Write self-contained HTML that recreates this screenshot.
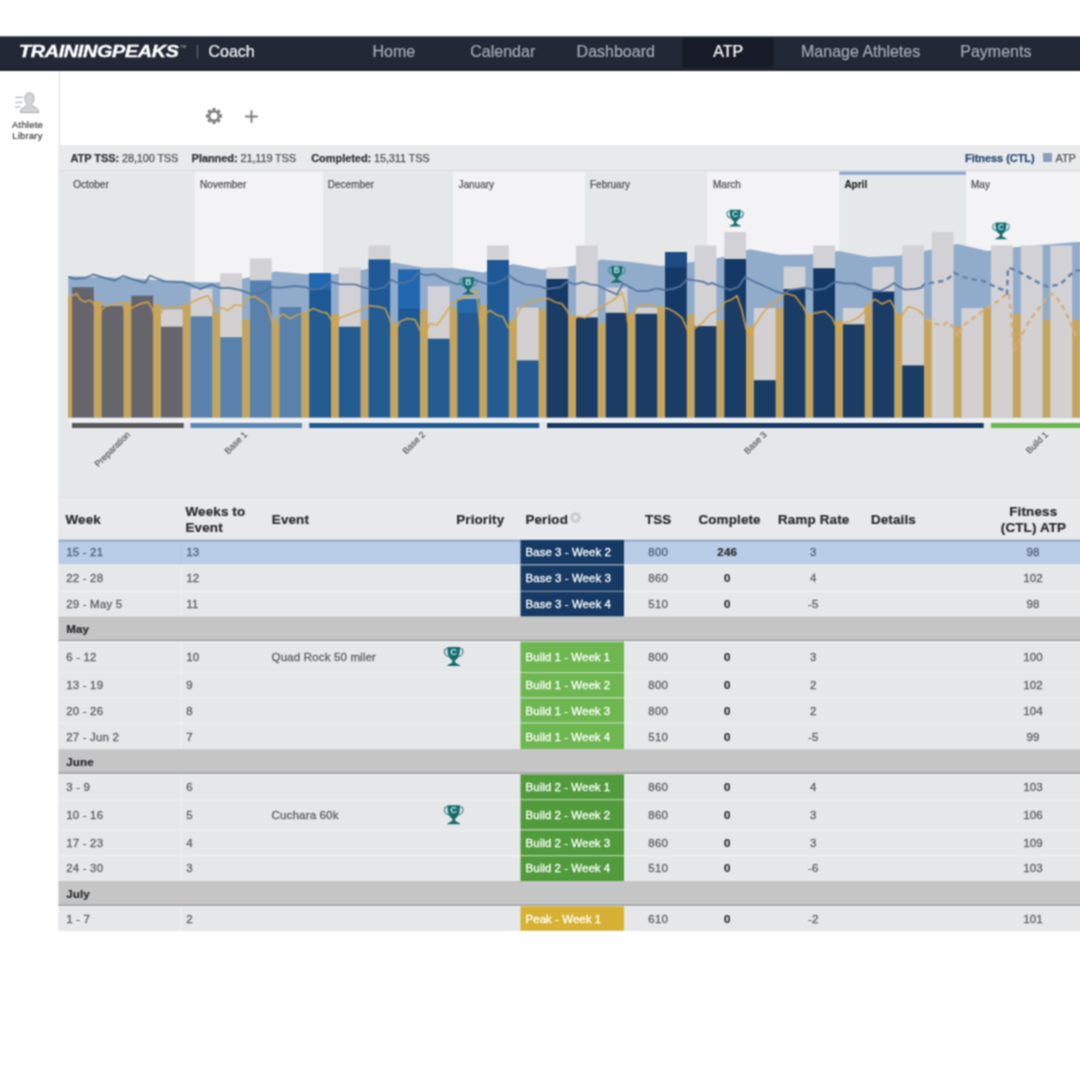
<!DOCTYPE html>
<html lang="en">
<head>
<meta charset="utf-8">
<title>TrainingPeaks Coach - ATP</title>
<style>
*{box-sizing:border-box;margin:0;padding:0}
html,body{width:1080px;height:1080px;background:#fff;overflow:hidden}
body{position:relative;font-family:"Liberation Sans",Arial,Helvetica,sans-serif;color:#555}
.abs{position:absolute}
#clip{position:absolute;left:0;top:0;width:1080px;height:1080px;overflow:hidden;background:#fff}
#blur{position:absolute;left:-40px;top:-40px;width:1160px;height:1160px;background:#fff;filter:url(#soft)}
#page{position:absolute;left:40px;top:40px;width:1080px;height:1080px}
#nav{position:absolute;left:0;top:36px;width:1080px;height:35px}
#navbg{position:absolute;left:-40px;top:36px;width:1160px;height:35px;background:linear-gradient(#222836,#222836 80%,#1f2430);border-top:1px solid #646872}
#nav .logo{position:absolute;left:18.6px;top:0;height:35px;line-height:31px;font-size:16px;font-weight:bold;font-style:italic;color:#fff;transform:scaleX(1.235);transform-origin:0 50%;letter-spacing:-0.25px;white-space:nowrap;-webkit-text-stroke:0.35px #fff}
#nav .tm{position:absolute;left:180.3px;top:7.5px;font-size:4px;color:#c8cad0;line-height:5px}
#nav .div{position:absolute;left:196.5px;top:8.6px;width:1px;height:13.5px;background:#6f7480}
#nav .it{position:absolute;top:0;height:35px;line-height:31px;font-size:16px;color:#a6aab6;white-space:nowrap;-webkit-text-stroke:0.2px}
#nav .coach{color:#f2f3f6;left:208.5px}
#nav .act{position:absolute;left:682px;top:2px;width:92px;height:30px;background:#161b27;border-radius:4px}
#side .t{position:absolute;left:0;width:55px;text-align:center;font-size:9.3px;letter-spacing:0.28px;line-height:10.7px;color:#38393d;-webkit-text-stroke:0.2px;top:120px}
#vline{position:absolute;left:58.7px;top:71px;width:1.2px;height:75px;background:#dfe0e3}
#pedge{position:absolute;left:58px;top:145px;width:1px;height:786px;background:#eeeef1}
#panel{position:absolute;left:59px;top:145px;width:1061px;height:786px;background:#e6e7e9}
#stats{position:absolute;left:59px;top:145px;width:1061px;height:26px;background:#e9eaec;border-bottom:1px solid #dadbde}
#stats span{position:absolute;top:0;line-height:26px;font-size:11px;letter-spacing:-0.17px;color:#505155;white-space:nowrap;-webkit-text-stroke:0.25px}
#stats b{color:#34353a;letter-spacing:-0.05px}
#chart{position:absolute;left:0;top:171px;width:1080px;height:326.5px;overflow:visible;font-family:"Liberation Sans",Arial,sans-serif}
#tsvg{position:absolute;left:0;top:490px;overflow:visible;font-family:"Liberation Sans",Arial,sans-serif}
.gear{position:absolute;left:204px;top:106.3px}
.gear2{position:absolute;left:568.8px;top:510.8px}
.plus{position:absolute;left:245.3px;top:110.4px}
</style>
</head>
<body>
<svg width="0" height="0" style="position:absolute"><defs><filter id="soft" x="0" y="0" width="100%" height="100%" color-interpolation-filters="sRGB"><feConvolveMatrix order="3" kernelMatrix="0.2500 0.5000 0.2500 0.5000 1.0000 0.5000 0.2500 0.5000 0.2500" edgeMode="duplicate" preserveAlpha="true"/></filter></defs></svg>
<div id="clip">
<div id="blur">
<div id="page">
<div id="navbg"></div>
<div id="nav">
  <div class="logo">TRAININGPEAKS</div>
  <div class="tm">TM</div>
  <div class="div"></div>
  <div class="it coach">Coach</div>
  <div class="act"></div>
  <div class="it" style="left:372.5px">Home</div>
  <div class="it" style="left:470.3px">Calendar</div>
  <div class="it" style="left:576.6px">Dashboard</div>
  <div class="it" style="left:713.3px;color:#fff">ATP</div>
  <div class="it" style="left:801px">Manage Athletes</div>
  <div class="it" style="left:960.3px">Payments</div>
</div>
<div id="side">
  <svg class="abs" style="left:12px;top:90px" width="30" height="25" viewBox="12 90 30 25">
    <g stroke="#a9aaad" stroke-width="1.1" fill="none">
      <line x1="15.3" y1="97.4" x2="22.5" y2="97.4"/>
      <line x1="15.3" y1="102.3" x2="22.5" y2="102.3"/>
      <line x1="15.3" y1="107" x2="20.5" y2="107"/>
    </g>
    <path d="M29.5 92.8c2.9 0 4.6 2.2 4.6 5.3 0 2.6-1 4.9-2.4 6.2v1.4c2.9 1 6.6 2.6 7.2 6.8H20.1c.6-4.2 4.3-5.800 7.200-6.800v-1.400c-1.400-1.300-2.400-3.600-2.400-6.200 0-3.100 1.700-5.300 4.600-5.300z" fill="#d3d4d6" stroke="#a9aaad" stroke-width="1"/>
  </svg>
  <div class="t" style="top:120.4px">Athlete</div><div class="t" style="top:131px">Library</div>
</div>
<div id="vline"></div>
<svg class="gear" viewBox="-10 -10 20 20" width="20" height="20"><g fill="#808082"><rect x="-1.700" y="-8.1" width="3.4" height="3.6" rx="0.8" transform="rotate(0)"/><rect x="-1.700" y="-8.1" width="3.4" height="3.6" rx="0.8" transform="rotate(45)"/><rect x="-1.700" y="-8.1" width="3.4" height="3.6" rx="0.8" transform="rotate(90)"/><rect x="-1.700" y="-8.1" width="3.4" height="3.6" rx="0.8" transform="rotate(135)"/><rect x="-1.700" y="-8.1" width="3.4" height="3.6" rx="0.8" transform="rotate(180)"/><rect x="-1.700" y="-8.1" width="3.4" height="3.6" rx="0.8" transform="rotate(225)"/><rect x="-1.700" y="-8.1" width="3.4" height="3.6" rx="0.8" transform="rotate(270)"/><rect x="-1.700" y="-8.1" width="3.4" height="3.6" rx="0.8" transform="rotate(315)"/></g><circle r="4.700" fill="none" stroke="#808082" stroke-width="2.3"/></svg>
<svg class="plus" width="13" height="13" viewBox="-6.5 -6.5 13 13"><path d="M-6.300 0H6.300M0 -6.300V6.300" stroke="#7c7c7e" stroke-width="1.9" fill="none"/></svg>
<div id="pedge"></div>
<div id="panel"></div>
<div id="stats">
  <span style="left:11.4px"><b>ATP TSS:</b> 28,100 TSS</span>
  <span style="left:132.6px"><b>Planned:</b> 21,119 TSS</span>
  <span style="left:252.2px"><b>Completed:</b> 15,311 TSS</span>
  <span style="left:906px;color:#30507a"><b style="color:#30507a">Fitness (CTL)</b></span>
  <i class="abs" style="left:984px;top:7.500px;width:9.200px;height:9.600px;background:#8d9dbc"></i>
  <span style="left:996.6px">ATP</span>
</div>
<svg id="chart" viewBox="0 171 1080 326.5" width="1080" height="326.5">
<rect x="194.8" y="171.5" width="128.2" height="247" fill="#f3f3f5"/>
<rect x="453" y="171.5" width="132.0" height="247" fill="#f3f3f5"/>
<rect x="707" y="171.5" width="132.3" height="247" fill="#f3f3f5"/>
<rect x="966" y="171.5" width="154.0" height="247" fill="#f3f3f5"/>
<rect x="839.3" y="171.5" width="126.7" height="3.3" fill="#8ea7cf"/>
<rect x="68.3" y="417.5" width="1052" height="5" fill="#eeeff2"/>
<polygon points="68.3,276.0 97.7,277.0 127.4,278.0 157.0,280.0 186.7,282.0 216.3,282.6 246.0,278.0 275.6,271.5 305.3,274.0 334.9,274.3 364.6,269.6 394.2,262.6 423.9,267.8 453.5,268.0 483.2,272.4 512.8,264.0 542.5,269.6 572.1,266.0 601.8,259.4 631.4,261.9 661.1,266.0 690.7,262.2 720.4,257.6 750.0,249.3 779.7,254.8 809.3,254.4 839.0,251.1 868.6,257.0 898.3,255.7 927.9,250.2 957.6,244.0 987.2,251.0 1016.9,247.0 1046.5,244.6 1076.2,242.0 1120.0,242.0 1120.0,417.5 68.3,417.5" fill="#91accb"/>
<rect x="68.0" y="297.4" width="4.3" height="120.1" fill="#c5a660"/>
<rect x="93.5" y="301" width="8.4" height="116.5" fill="#c5a660"/>
<rect x="123.2" y="302" width="8.5" height="115.5" fill="#c5a660"/>
<rect x="152.8" y="304" width="8.5" height="113.5" fill="#c5a660"/>
<rect x="182.4" y="304.8" width="8.5" height="112.7" fill="#c5a660"/>
<rect x="212.1" y="313" width="8.5" height="104.5" fill="#c5a660"/>
<rect x="241.7" y="319.6" width="8.5" height="97.9" fill="#c5a660"/>
<rect x="271.4" y="321.5" width="8.5" height="96.0" fill="#c5a660"/>
<rect x="301.0" y="314" width="8.5" height="103.5" fill="#c5a660"/>
<rect x="330.7" y="314" width="8.5" height="103.5" fill="#c5a660"/>
<rect x="360.3" y="319.6" width="8.5" height="97.9" fill="#c5a660"/>
<rect x="390.0" y="323.5" width="8.5" height="94.0" fill="#c5a660"/>
<rect x="419.6" y="309.4" width="8.5" height="108.1" fill="#c5a660"/>
<rect x="449.3" y="308.2" width="8.5" height="109.3" fill="#c5a660"/>
<rect x="478.9" y="304.8" width="8.5" height="112.7" fill="#c5a660"/>
<rect x="508.6" y="320.5" width="8.4" height="97.0" fill="#c5a660"/>
<rect x="538.2" y="309.4" width="8.4" height="108.1" fill="#c5a660"/>
<rect x="567.9" y="315.2" width="8.4" height="102.3" fill="#c5a660"/>
<rect x="597.5" y="323.3" width="8.4" height="94.2" fill="#c5a660"/>
<rect x="627.2" y="314" width="8.4" height="103.5" fill="#c5a660"/>
<rect x="656.9" y="307.6" width="8.4" height="109.9" fill="#c5a660"/>
<rect x="686.5" y="314" width="8.4" height="103.5" fill="#c5a660"/>
<rect x="716.1" y="320.5" width="8.4" height="97.0" fill="#c5a660"/>
<rect x="745.8" y="326" width="8.4" height="91.5" fill="#c5a660"/>
<rect x="775.4" y="307.6" width="8.4" height="109.9" fill="#c5a660"/>
<rect x="805.1" y="314" width="8.4" height="103.5" fill="#c5a660"/>
<rect x="834.8" y="320.5" width="8.4" height="97.0" fill="#c5a660"/>
<rect x="864.4" y="305.7" width="8.4" height="111.8" fill="#c5a660"/>
<rect x="894.0" y="314" width="8.4" height="103.5" fill="#c5a660"/>
<rect x="923.7" y="319.6" width="8.4" height="97.9" fill="#c5a660"/>
<rect x="953.4" y="326.1" width="8.4" height="91.4" fill="#c5a660"/>
<rect x="983.0" y="307.6" width="8.4" height="109.9" fill="#c5a660"/>
<rect x="1012.6" y="314" width="8.4" height="103.5" fill="#c5a660"/>
<rect x="1042.3" y="319.6" width="8.4" height="97.9" fill="#c5a660"/>
<rect x="1072.0" y="319.6" width="8.4" height="97.9" fill="#c5a660"/>
<rect x="72.0" y="287.2" width="21.8" height="130.3" fill="#64646f"/>
<rect x="101.7" y="306.0" width="21.8" height="111.5" fill="#64646f"/>
<rect x="131.3" y="295.6" width="21.8" height="121.9" fill="#64646f"/>
<rect x="160.9" y="309.4" width="21.8" height="108.1" fill="#d2d2d6"/>
<rect x="160.9" y="326.7" width="21.8" height="90.8" fill="#64646f"/>
<rect x="190.6" y="288.5" width="21.8" height="129.0" fill="#d2d2d6"/>
<rect x="190.6" y="316.3" width="21.8" height="101.2" fill="#5581b0"/>
<rect x="220.2" y="273.3" width="21.8" height="144.2" fill="#d2d2d6"/>
<rect x="220.2" y="337.2" width="21.8" height="80.3" fill="#5581b0"/>
<rect x="249.9" y="258.5" width="21.8" height="159.0" fill="#d2d2d6"/>
<rect x="249.9" y="280.4" width="21.8" height="137.1" fill="#5581b0"/>
<rect x="279.5" y="307.0" width="21.8" height="110.5" fill="#5581b0"/>
<rect x="309.2" y="273.3" width="21.8" height="144.2" fill="#1e5995"/>
<rect x="309.2" y="273.3" width="21.8" height="15.7" fill="#2268b0"/>
<rect x="338.8" y="267.4" width="21.8" height="150.1" fill="#d2d2d6"/>
<rect x="338.8" y="326.7" width="21.8" height="90.8" fill="#1e5995"/>
<rect x="368.5" y="245.5" width="21.8" height="172.0" fill="#d2d2d6"/>
<rect x="368.5" y="259.4" width="21.8" height="158.1" fill="#1e5995"/>
<rect x="398.1" y="269.6" width="21.8" height="147.9" fill="#1e5995"/>
<rect x="398.1" y="269.6" width="21.8" height="38.9" fill="#2268b0"/>
<rect x="427.8" y="286.3" width="21.8" height="131.2" fill="#d2d2d6"/>
<rect x="427.8" y="338.7" width="21.8" height="78.8" fill="#1e5995"/>
<rect x="457.4" y="299.3" width="21.8" height="118.2" fill="#1e5995"/>
<rect x="457.4" y="299.3" width="21.8" height="13.7" fill="#2268b0"/>
<rect x="487.1" y="245.5" width="21.8" height="172.0" fill="#d2d2d6"/>
<rect x="487.1" y="260.0" width="21.8" height="157.5" fill="#1e5995"/>
<rect x="516.8" y="307.6" width="21.8" height="109.9" fill="#d2d2d6"/>
<rect x="516.8" y="360.4" width="21.8" height="57.1" fill="#1e5995"/>
<rect x="546.4" y="267.4" width="21.8" height="150.1" fill="#d2d2d6"/>
<rect x="546.4" y="278.9" width="21.8" height="138.6" fill="#153967"/>
<rect x="576.0" y="245.5" width="21.8" height="172.0" fill="#d2d2d6"/>
<rect x="576.0" y="317.4" width="21.8" height="100.1" fill="#153967"/>
<rect x="605.7" y="287.5" width="21.8" height="130.0" fill="#d2d2d6"/>
<rect x="605.7" y="312.8" width="21.8" height="104.7" fill="#153967"/>
<rect x="635.4" y="307.6" width="21.8" height="109.9" fill="#d2d2d6"/>
<rect x="635.4" y="313.7" width="21.8" height="103.8" fill="#153967"/>
<rect x="665.0" y="252.0" width="21.8" height="165.5" fill="#153967"/>
<rect x="665.0" y="252.0" width="21.8" height="15.4" fill="#1d4c82"/>
<rect x="694.6" y="245.5" width="21.8" height="172.0" fill="#d2d2d6"/>
<rect x="694.6" y="326.1" width="21.8" height="91.4" fill="#153967"/>
<rect x="724.3" y="232.0" width="21.8" height="185.5" fill="#d2d2d6"/>
<rect x="724.3" y="259.0" width="21.8" height="158.5" fill="#153967"/>
<rect x="753.9" y="308.0" width="21.8" height="109.5" fill="#d2d2d6"/>
<rect x="753.9" y="380.2" width="21.8" height="37.3" fill="#153967"/>
<rect x="783.6" y="266.7" width="21.8" height="150.8" fill="#d2d2d6"/>
<rect x="783.6" y="289.0" width="21.8" height="128.5" fill="#153967"/>
<rect x="813.2" y="245.5" width="21.8" height="172.0" fill="#d2d2d6"/>
<rect x="813.2" y="268.2" width="21.8" height="149.3" fill="#153967"/>
<rect x="842.9" y="308.0" width="21.8" height="109.5" fill="#d2d2d6"/>
<rect x="842.9" y="324.3" width="21.8" height="93.2" fill="#153967"/>
<rect x="872.5" y="266.9" width="21.8" height="150.6" fill="#d2d2d6"/>
<rect x="872.5" y="291.5" width="21.8" height="126.0" fill="#153967"/>
<rect x="902.2" y="245.5" width="21.8" height="172.0" fill="#d2d2d6"/>
<rect x="902.2" y="365.4" width="21.8" height="52.1" fill="#153967"/>
<rect x="931.8" y="232.0" width="21.8" height="185.5" fill="#d2d2d6"/>
<rect x="961.5" y="308.1" width="21.8" height="109.4" fill="#d2d2d6"/>
<rect x="991.1" y="245.5" width="21.8" height="172.0" fill="#d2d2d6"/>
<rect x="1020.8" y="245.5" width="21.8" height="172.0" fill="#d2d2d6"/>
<rect x="1050.4" y="245.5" width="21.8" height="172.0" fill="#d2d2d6"/>
<rect x="1080.1" y="245.5" width="21.8" height="172.0" fill="#d2d2d6"/>
<polygon points="68.0,299.3 72.0,295.6 77.0,293.7 80.0,299.3 85.0,302.0 90.0,300.2 94.0,303.9 98.0,316.0 101.0,310.4 105.0,306.7 115.0,303.9 122.0,302.0 126.0,314.0 130.0,308.5 140.0,303.9 148.0,302.0 152.0,308.5 156.0,321.5 160.0,314.0 165.0,307.6 175.0,306.7 185.0,307.6 190.0,303.0 200.0,298.3 208.0,295.6 212.0,303.0 215.0,311.3 222.0,307.6 228.0,310.4 235.0,304.8 242.0,305.7 248.0,297.4 255.0,296.5 260.0,300.0 267.0,304.8 272.0,321.5 278.0,317.8 283.0,314.0 290.0,318.7 297.0,315.0 305.0,313.0 313.0,308.5 322.0,312.2 327.0,313.0 331.0,319.6 335.0,326.0 340.0,317.8 350.0,314.0 360.0,310.4 368.0,305.7 378.0,306.7 385.0,308.5 390.0,319.6 394.0,334.4 400.0,321.5 407.0,318.7 415.0,319.6 420.0,330.0 424.0,335.5 430.0,323.3 437.0,325.0 445.0,314.0 452.0,303.0 460.0,299.3 470.0,295.6 476.0,290.0 478.0,304.8 480.0,325.2 485.0,314.0 490.0,310.4 497.0,315.0 503.0,316.9 508.0,327.0 512.0,331.7 516.0,317.8 520.0,308.5 528.0,303.0 538.0,299.3 548.0,298.3 555.0,302.0 562.0,303.9 567.0,310.4 572.0,321.5 578.0,316.0 585.0,317.8 590.0,314.0 597.0,309.0 605.0,304.8 612.0,301.0 618.0,296.0 622.0,292.8 625.0,303.0 628.0,323.3 633.0,314.0 638.0,305.7 650.0,304.8 658.0,307.6 668.0,308.5 675.0,312.2 682.0,317.8 687.0,328.9 690.0,334.4 695.0,328.0 702.0,323.3 710.0,314.0 718.0,310.4 725.0,302.0 732.0,299.3 737.0,295.6 742.0,310.4 746.0,328.9 750.0,335.4 755.0,325.2 762.0,314.0 770.0,304.8 778.0,299.3 785.0,293.2 795.0,296.0 803.0,306.7 808.0,316.0 815.0,313.0 825.0,311.3 832.0,317.8 838.0,330.7 843.0,323.3 850.0,321.5 858.0,317.8 864.0,312.2 868.0,304.8 875.0,299.3 882.0,303.9 890.0,300.2 894.0,306.7 898.0,321.5 903.0,314.0 908.0,306.7 915.0,308.5 920.0,311.3 928.0,320.0 935.0,323.3 942.0,326.0 948.0,321.5 954.0,328.0 958.0,337.0 962.0,326.5 970.0,320.5 980.0,313.0 988.0,307.6 998.0,301.0 1006.0,294.6 1009.0,292.8 1011.0,314.0 1014.0,351.0 1017.0,347.4 1022.0,334.4 1030.0,319.6 1040.0,306.7 1048.0,295.6 1052.0,293.7 1058.0,299.3 1065.0,310.4 1070.0,321.5 1075.0,334.4 1082.0,338.0 1120.0,338.0 1120.0,417.5 68.3,417.5" fill="#e0a62c" opacity="0.03"/>
<polyline points="68.0,299.3 72.0,295.6 77.0,293.7 80.0,299.3 85.0,302.0 90.0,300.2 94.0,303.9 98.0,316.0 101.0,310.4 105.0,306.7 115.0,303.9 122.0,302.0 126.0,314.0 130.0,308.5 140.0,303.9 148.0,302.0 152.0,308.5 156.0,321.5 160.0,314.0 165.0,307.6 175.0,306.7 185.0,307.6 190.0,303.0 200.0,298.3 208.0,295.6 212.0,303.0 215.0,311.3 222.0,307.6 228.0,310.4 235.0,304.8 242.0,305.7 248.0,297.4 255.0,296.5 260.0,300.0 267.0,304.8 272.0,321.5 278.0,317.8 283.0,314.0 290.0,318.7 297.0,315.0 305.0,313.0 313.0,308.5 322.0,312.2 327.0,313.0 331.0,319.6 335.0,326.0 340.0,317.8 350.0,314.0 360.0,310.4 368.0,305.7 378.0,306.7 385.0,308.5 390.0,319.6 394.0,334.4 400.0,321.5 407.0,318.7 415.0,319.6 420.0,330.0 424.0,335.5 430.0,323.3 437.0,325.0 445.0,314.0 452.0,303.0 460.0,299.3 470.0,295.6 476.0,290.0 478.0,304.8 480.0,325.2 485.0,314.0 490.0,310.4 497.0,315.0 503.0,316.9 508.0,327.0 512.0,331.7 516.0,317.8 520.0,308.5 528.0,303.0 538.0,299.3 548.0,298.3 555.0,302.0 562.0,303.9 567.0,310.4 572.0,321.5 578.0,316.0 585.0,317.8 590.0,314.0 597.0,309.0 605.0,304.8 612.0,301.0 618.0,296.0 622.0,292.8 625.0,303.0 628.0,323.3 633.0,314.0 638.0,305.7 650.0,304.8 658.0,307.6 668.0,308.5 675.0,312.2 682.0,317.8 687.0,328.9 690.0,334.4 695.0,328.0 702.0,323.3 710.0,314.0 718.0,310.4 725.0,302.0 732.0,299.3 737.0,295.6 742.0,310.4 746.0,328.9 750.0,335.4 755.0,325.2 762.0,314.0 770.0,304.8 778.0,299.3 785.0,293.2 795.0,296.0 803.0,306.7 808.0,316.0 815.0,313.0 825.0,311.3 832.0,317.8 838.0,330.7 843.0,323.3 850.0,321.5 858.0,317.8 864.0,312.2 868.0,304.8 875.0,299.3 882.0,303.9 890.0,300.2 894.0,306.7 898.0,321.5 903.0,314.0 908.0,306.7 915.0,308.5 920.0,311.3" fill="none" stroke="#d8a441" stroke-width="1.8" stroke-linejoin="round" opacity="0.8"/>
<polyline points="920.0,311.3 928.0,320.0 935.0,323.3 942.0,326.0 948.0,321.5 954.0,328.0 958.0,337.0 962.0,326.5 970.0,320.5 980.0,313.0 988.0,307.6 998.0,301.0 1006.0,294.6 1009.0,292.8 1011.0,314.0 1014.0,351.0 1017.0,347.4 1022.0,334.4 1030.0,319.6 1040.0,306.7 1048.0,295.6 1052.0,293.7 1058.0,299.3 1065.0,310.4 1070.0,321.5 1075.0,334.4 1082.0,338.0" fill="none" stroke="#d9ab7c" stroke-width="2.5" stroke-dasharray="5.5 4" opacity="0.95" stroke-linejoin="round"/>
<polyline points="68.3,277.0 75.0,279.0 85.0,278.0 93.0,274.5 105.0,278.0 115.0,280.5 123.0,276.0 135.0,280.0 145.0,283.0 150.0,275.5 158.0,279.0 165.0,281.5 183.0,282.0 190.0,284.5 200.0,289.0 205.0,287.0 212.0,284.5 220.0,288.0 230.0,288.0 240.0,290.0 250.0,293.7 262.0,292.8 270.0,287.2 280.0,287.8 295.0,286.0 305.0,287.0 312.0,289.6 322.0,288.5 331.0,281.7 340.0,284.4 355.0,284.4 365.0,287.8 375.0,289.6 385.0,287.2 391.0,279.8 398.0,283.0 405.0,283.0 412.0,279.8 418.0,273.0 425.0,275.2 435.0,274.3 445.0,279.8 457.0,284.4 467.0,282.5 475.0,279.8 485.0,283.5 495.0,283.5 505.0,278.9 509.0,275.2 515.0,279.8 525.0,284.4 540.0,286.3 547.0,289.0 560.0,287.2 567.0,281.7 575.0,284.4 583.0,282.2 590.0,284.4 598.0,285.4 605.0,289.0 615.0,293.7 617.0,294.6 623.0,283.5 630.0,287.2 637.0,291.0 648.0,291.0 656.0,288.5 665.0,290.0 672.0,289.0 680.0,286.3 687.0,279.3 695.0,280.4 703.0,281.7 708.0,284.4 712.0,283.0 720.0,286.3 730.0,290.0 738.0,287.2 745.0,277.0 752.0,280.7 765.0,286.3 775.0,291.0 783.0,293.7 790.0,290.0 805.0,287.8 815.0,290.0 825.0,288.5 835.0,281.7 845.0,283.5 855.0,283.5 862.0,286.3 870.0,289.6 880.0,291.0 888.0,287.2 894.0,283.0 900.0,287.2 905.0,289.6 915.0,289.0 921.0,287.8" fill="none" stroke="#52739c" stroke-width="1.9" stroke-linejoin="round" opacity="0.9"/>
<polyline points="921.0,287.8 925.0,283.5 932.0,282.8 945.0,280.7 950.0,277.0 954.0,272.6 962.0,276.8 975.0,279.8 983.0,280.8 990.0,284.4 1003.0,290.0 1007.0,293.7 1008.0,267.8 1015.0,269.6 1025.0,275.2 1040.0,283.5 1048.0,286.7 1060.0,284.4 1068.0,277.0 1075.0,270.6 1082.0,270.6" fill="none" stroke="#6883a8" stroke-width="2.5" stroke-dasharray="5.5 4" stroke-linejoin="round"/>
<rect x="72" y="423" width="111.8" height="5" fill="#58585c"/>
<rect x="190.5" y="423" width="111.5" height="5" fill="#5a87b3"/>
<rect x="309.3" y="423" width="229.9" height="5" fill="#1f5a92"/>
<rect x="547" y="423" width="436.7" height="5" fill="#163a64"/>
<rect x="991.1" y="423" width="128.9" height="5" fill="#6cb74f"/>
<text x="126.2" y="430.6" transform="rotate(-45 126.2 430.6)" text-anchor="end" dominant-baseline="hanging" font-size="8.9" fill="#58595d" stroke="#58595d" stroke-width="0.2">Preparation</text>
<text x="243.2" y="430.6" transform="rotate(-45 243.2 430.6)" text-anchor="end" dominant-baseline="hanging" font-size="8.9" fill="#58595d" stroke="#58595d" stroke-width="0.2">Base 1</text>
<text x="421.2" y="430.6" transform="rotate(-45 421.2 430.6)" text-anchor="end" dominant-baseline="hanging" font-size="8.9" fill="#58595d" stroke="#58595d" stroke-width="0.2">Base 2</text>
<text x="762.7" y="430.6" transform="rotate(-45 762.7 430.6)" text-anchor="end" dominant-baseline="hanging" font-size="8.9" fill="#58595d" stroke="#58595d" stroke-width="0.2">Base 3</text>
<text x="1044.2" y="430.6" transform="rotate(-45 1044.2 430.6)" text-anchor="end" dominant-baseline="hanging" font-size="8.9" fill="#58595d" stroke="#58595d" stroke-width="0.2">Build 1</text>
<text x="73.2" y="187.6" font-size="10" fill="#505155" stroke="#505155" stroke-width="0.25">October</text>
<text x="200.1" y="187.6" font-size="10" fill="#505155" stroke="#505155" stroke-width="0.25">November</text>
<text x="327.8" y="187.6" font-size="10" fill="#505155" stroke="#505155" stroke-width="0.25">December</text>
<text x="458.5" y="187.6" font-size="10" fill="#505155" stroke="#505155" stroke-width="0.25">January</text>
<text x="590" y="187.6" font-size="10" fill="#505155" stroke="#505155" stroke-width="0.25">February</text>
<text x="713" y="187.6" font-size="10" fill="#505155" stroke="#505155" stroke-width="0.25">March</text>
<text x="844.4" y="187.6" font-size="10" font-weight="bold" fill="#202022" stroke="#202022" stroke-width="0.15">April</text>
<text x="971" y="187.6" font-size="10" fill="#505155" stroke="#505155" stroke-width="0.25">May</text>
<g transform="translate(735.2 209.8) scale(1.0)"><path d="M-5.900 1.5 C-9.300 1.100 -9.100 7.300 -4.300 8.500 M5.900 1.500 C9.300 1.100 9.100 7.300 4.300 8.500" fill="none" stroke="#3a9193" stroke-width="1.15"/><path d="M-5.600 0 H5.600 C5.600 6.600 4.300 10.200 1.300 11.600 L1.200 13.200 C1.700 14.800 5.600 15.200 5.900 16.800 H-5.900 C-5.600 15.200 -1.700 14.800 -1.200 13.200 L-1.300 11.600 C-4.300 10.200 -5.600 6.600 -5.600 0 Z" fill="#196b6d"/><text x="0" y="7.100" text-anchor="middle" font-size="8.200" font-weight="bold" fill="#b2f3ee">C</text></g>
<g transform="translate(1001 222.5) scale(1.0)"><path d="M-5.900 1.5 C-9.300 1.100 -9.100 7.300 -4.300 8.500 M5.900 1.500 C9.300 1.100 9.100 7.300 4.300 8.500" fill="none" stroke="#3a9193" stroke-width="1.15"/><path d="M-5.600 0 H5.600 C5.600 6.600 4.300 10.200 1.300 11.600 L1.200 13.200 C1.700 14.800 5.600 15.200 5.900 16.800 H-5.900 C-5.600 15.200 -1.700 14.800 -1.200 13.200 L-1.300 11.600 C-4.300 10.200 -5.600 6.600 -5.600 0 Z" fill="#196b6d"/><text x="0" y="7.100" text-anchor="middle" font-size="8.200" font-weight="bold" fill="#b2f3ee">C</text></g>
<g transform="translate(468.2 277.3) scale(1.03)"><path d="M-5.900 1.5 C-9.300 1.100 -9.100 7.300 -4.300 8.500 M5.900 1.500 C9.300 1.100 9.100 7.300 4.300 8.500" fill="none" stroke="#3a9193" stroke-width="1.15"/><path d="M-5.600 0 H5.600 C5.600 6.600 4.300 10.200 1.300 11.600 L1.200 13.200 C1.700 14.800 5.600 15.200 5.900 16.800 H-5.900 C-5.600 15.200 -1.700 14.800 -1.200 13.200 L-1.300 11.600 C-4.300 10.200 -5.600 6.600 -5.600 0 Z" fill="#196b6d"/><text x="0" y="7.100" text-anchor="middle" font-size="8.200" font-weight="bold" fill="#b2f3ee">B</text></g>
<g transform="translate(616.8 265.9) scale(1.0)"><path d="M-5.900 1.5 C-9.300 1.100 -9.100 7.300 -4.300 8.500 M5.900 1.500 C9.300 1.100 9.100 7.300 4.300 8.500" fill="none" stroke="#3a9193" stroke-width="1.15"/><path d="M-5.600 0 H5.600 C5.600 6.600 4.300 10.200 1.300 11.600 L1.200 13.200 C1.700 14.800 5.600 15.200 5.900 16.800 H-5.900 C-5.600 15.200 -1.700 14.800 -1.200 13.200 L-1.300 11.600 C-4.300 10.200 -5.600 6.600 -5.600 0 Z" fill="#196b6d"/><text x="0" y="7.100" text-anchor="middle" font-size="8.200" font-weight="bold" fill="#b2f3ee">B</text></g>
</svg>
<svg id="tsvg" viewBox="0 490 1080 450" width="1080" height="450">
<rect x="58.6" y="497" width="1062" height="43.2" fill="#e8e9eb"/>
<rect x="58.6" y="496.8" width="1062" height="1" fill="#dcdde0"/>
<rect x="58.6" y="498.6" width="1062" height="1" fill="#ecedef"/>
<text x="65.5" y="524.01" font-size="13.4" fill="#2b2c2f" stroke="#2b2c2f" stroke-width="0.22" font-weight="bold" letter-spacing="0.16">Week</text>
<text x="185.5" y="515.61" font-size="13.4" fill="#2b2c2f" stroke="#2b2c2f" stroke-width="0.22" font-weight="bold" letter-spacing="0.16">Weeks to</text>
<text x="185.5" y="531.71" font-size="13.4" fill="#2b2c2f" stroke="#2b2c2f" stroke-width="0.22" font-weight="bold" letter-spacing="0.16">Event</text>
<text x="271.8" y="524.01" font-size="13.4" fill="#2b2c2f" stroke="#2b2c2f" stroke-width="0.22" font-weight="bold" letter-spacing="0.16">Event</text>
<text x="456.2" y="524.01" font-size="13.4" fill="#2b2c2f" stroke="#2b2c2f" stroke-width="0.22" font-weight="bold" letter-spacing="0.16">Priority</text>
<text x="525.4" y="524.01" font-size="13.4" fill="#2b2c2f" stroke="#2b2c2f" stroke-width="0.22" font-weight="bold" letter-spacing="0.16">Period</text>
<text x="658.2" y="524.01" font-size="13.4" fill="#2b2c2f" stroke="#2b2c2f" stroke-width="0.22" font-weight="bold" letter-spacing="0.16" text-anchor="middle">TSS</text>
<text x="729.6" y="524.01" font-size="13.4" fill="#2b2c2f" stroke="#2b2c2f" stroke-width="0.22" font-weight="bold" letter-spacing="0.16" text-anchor="middle">Complete</text>
<text x="813.7" y="524.01" font-size="13.4" fill="#2b2c2f" stroke="#2b2c2f" stroke-width="0.22" font-weight="bold" letter-spacing="0.16" text-anchor="middle">Ramp Rate</text>
<text x="893.4" y="524.01" font-size="13.4" fill="#2b2c2f" stroke="#2b2c2f" stroke-width="0.22" font-weight="bold" letter-spacing="0.16" text-anchor="middle">Details</text>
<text x="1033.3" y="515.61" font-size="13.4" fill="#2b2c2f" stroke="#2b2c2f" stroke-width="0.22" font-weight="bold" letter-spacing="0.16" text-anchor="middle">Fitness</text>
<text x="1033.5" y="531.71" font-size="13.4" fill="#2b2c2f" stroke="#2b2c2f" stroke-width="0.22" font-weight="bold" letter-spacing="0.16" text-anchor="middle">(CTL) ATP</text>
<rect x="58.6" y="540.0" width="1062" height="24.8" fill="#b9cde6"/>
<rect x="58.6" y="539.7" width="1062" height="1.9" fill="#8fa6c7"/>
<rect x="180.2" y="541.5" width="1" height="23.3" fill="#b1c5e0"/>
<rect x="520.5" y="540.0" width="103.5" height="24.8" fill="#163a64"/>
<text x="66.3" y="556.46" font-size="11.5" fill="#4f5d78" stroke="#4f5d78" stroke-width="0.3" letter-spacing="0.16">15 - 21</text>
<text x="186.3" y="556.46" font-size="11.5" fill="#4f5d78" stroke="#4f5d78" stroke-width="0.3" letter-spacing="0.16">13</text>
<text x="525.5" y="556.46" font-size="11.5" fill="#fff" stroke="#fff" stroke-width="0.3" letter-spacing="0.04">Base 3 - Week 2</text>
<text x="658.2" y="556.46" font-size="11.5" fill="#4f5d78" stroke="#4f5d78" stroke-width="0.3" letter-spacing="0.16" text-anchor="middle">800</text>
<text x="727.2" y="556.46" font-size="11.5" fill="#2b2c2f" stroke="#2b2c2f" stroke-width="0.22" font-weight="bold" letter-spacing="0.16" text-anchor="middle">246</text>
<text x="813.3" y="556.46" font-size="11.5" fill="#4f5d78" stroke="#4f5d78" stroke-width="0.3" letter-spacing="0.16" text-anchor="middle">3</text>
<text x="1033.0" y="556.46" font-size="11.5" fill="#4f5d78" stroke="#4f5d78" stroke-width="0.3" letter-spacing="0.16" text-anchor="middle">98</text>
<rect x="58.6" y="564.8" width="1062" height="26.3" fill="#e6e7e9"/>
<rect x="58.6" y="564.6" width="1062" height="1.1" fill="#f0f1f3"/>
<rect x="180.2" y="564.8" width="1" height="26.3" fill="#eff0f2"/>
<rect x="520.5" y="564.8" width="103.5" height="26.3" fill="#163a64"/>
<rect x="520.5" y="564.5" width="103.5" height="1.3" fill="#fff" opacity="0.3"/>
<text x="66.3" y="582.36" font-size="11.5" fill="#5d5e62" stroke="#5d5e62" stroke-width="0.3" letter-spacing="0.16">22 - 28</text>
<text x="186.3" y="582.36" font-size="11.5" fill="#5d5e62" stroke="#5d5e62" stroke-width="0.3" letter-spacing="0.16">12</text>
<text x="525.5" y="582.36" font-size="11.5" fill="#fff" stroke="#fff" stroke-width="0.3" letter-spacing="0.04">Base 3 - Week 3</text>
<text x="658.2" y="582.36" font-size="11.5" fill="#5d5e62" stroke="#5d5e62" stroke-width="0.3" letter-spacing="0.16" text-anchor="middle">860</text>
<text x="727.2" y="582.36" font-size="11.5" fill="#2b2c2f" stroke="#2b2c2f" stroke-width="0.22" font-weight="bold" letter-spacing="0.16" text-anchor="middle">0</text>
<text x="813.3" y="582.36" font-size="11.5" fill="#5d5e62" stroke="#5d5e62" stroke-width="0.3" letter-spacing="0.16" text-anchor="middle">4</text>
<text x="1033.0" y="582.36" font-size="11.5" fill="#5d5e62" stroke="#5d5e62" stroke-width="0.3" letter-spacing="0.16" text-anchor="middle">102</text>
<rect x="58.6" y="591.1" width="1062" height="25.5" fill="#e6e7e9"/>
<rect x="58.6" y="590.9" width="1062" height="1.1" fill="#f0f1f3"/>
<rect x="180.2" y="591.1" width="1" height="25.5" fill="#eff0f2"/>
<rect x="520.5" y="591.1" width="103.5" height="25.5" fill="#163a64"/>
<rect x="520.5" y="590.8" width="103.5" height="1.3" fill="#fff" opacity="0.3"/>
<text x="66.3" y="607.76" font-size="11.5" fill="#5d5e62" stroke="#5d5e62" stroke-width="0.3" letter-spacing="0.16">29 - May 5</text>
<text x="186.3" y="607.76" font-size="11.5" fill="#5d5e62" stroke="#5d5e62" stroke-width="0.3" letter-spacing="0.16">11</text>
<text x="525.5" y="607.76" font-size="11.5" fill="#fff" stroke="#fff" stroke-width="0.3" letter-spacing="0.04">Base 3 - Week 4</text>
<text x="658.2" y="607.76" font-size="11.5" fill="#5d5e62" stroke="#5d5e62" stroke-width="0.3" letter-spacing="0.16" text-anchor="middle">510</text>
<text x="727.2" y="607.76" font-size="11.5" fill="#2b2c2f" stroke="#2b2c2f" stroke-width="0.22" font-weight="bold" letter-spacing="0.16" text-anchor="middle">0</text>
<text x="813.3" y="607.76" font-size="11.5" fill="#5d5e62" stroke="#5d5e62" stroke-width="0.3" letter-spacing="0.16" text-anchor="middle">-5</text>
<text x="1033.0" y="607.76" font-size="11.5" fill="#5d5e62" stroke="#5d5e62" stroke-width="0.3" letter-spacing="0.16" text-anchor="middle">98</text>
<rect x="58.6" y="616.6" width="1062" height="24.8" fill="#c5c5c6"/>
<rect x="58.6" y="639.9" width="1062" height="1.6" fill="#959698"/>
<text x="66.2" y="632.99" font-size="11.6" fill="#2b2c2f" stroke="#2b2c2f" stroke-width="0.22" font-weight="bold" letter-spacing="0.12">May</text>
<rect x="58.6" y="641.4" width="1062" height="31.0" fill="#e6e7e9"/>
<rect x="58.6" y="641.2" width="1062" height="1.1" fill="#f0f1f3"/>
<rect x="180.2" y="641.4" width="1" height="31.0" fill="#eff0f2"/>
<rect x="520.5" y="641.4" width="103.5" height="31.0" fill="#6db650"/>
<rect x="520.5" y="641.1" width="103.5" height="1.3" fill="#fff" opacity="0.3"/>
<text x="66.3" y="660.66" font-size="11.5" fill="#5d5e62" stroke="#5d5e62" stroke-width="0.3" letter-spacing="0.16">6 - 12</text>
<text x="186.3" y="660.66" font-size="11.5" fill="#5d5e62" stroke="#5d5e62" stroke-width="0.3" letter-spacing="0.16">10</text>
<text x="271.6" y="660.66" font-size="11.5" fill="#5d5e62" stroke="#5d5e62" stroke-width="0.3" letter-spacing="0.16">Quad Rock 50 miler</text>
<g transform="translate(453.7 647.0) scale(1.13)"><path d="M-5.900 1.5 C-9.300 1.100 -9.100 7.300 -4.300 8.500 M5.900 1.500 C9.300 1.100 9.100 7.300 4.300 8.500" fill="none" stroke="#3a9193" stroke-width="1.15"/><path d="M-5.600 0 H5.600 C5.600 6.600 4.300 10.200 1.300 11.600 L1.200 13.200 C1.700 14.800 5.600 15.200 5.900 16.800 H-5.900 C-5.600 15.200 -1.700 14.800 -1.200 13.200 L-1.300 11.600 C-4.300 10.200 -5.600 6.600 -5.600 0 Z" fill="#196b6d"/><text x="0" y="7.100" text-anchor="middle" font-size="8.200" font-weight="bold" fill="#b2f3ee">C</text></g>
<text x="525.5" y="660.66" font-size="11.5" fill="#fff" stroke="#fff" stroke-width="0.3" letter-spacing="0.04">Build 1 - Week 1</text>
<text x="658.2" y="660.66" font-size="11.5" fill="#5d5e62" stroke="#5d5e62" stroke-width="0.3" letter-spacing="0.16" text-anchor="middle">800</text>
<text x="727.2" y="660.66" font-size="11.5" fill="#2b2c2f" stroke="#2b2c2f" stroke-width="0.22" font-weight="bold" letter-spacing="0.16" text-anchor="middle">0</text>
<text x="813.3" y="660.66" font-size="11.5" fill="#5d5e62" stroke="#5d5e62" stroke-width="0.3" letter-spacing="0.16" text-anchor="middle">3</text>
<text x="1033.0" y="660.66" font-size="11.5" fill="#5d5e62" stroke="#5d5e62" stroke-width="0.3" letter-spacing="0.16" text-anchor="middle">100</text>
<rect x="58.6" y="672.4" width="1062" height="25.4" fill="#e6e7e9"/>
<rect x="58.6" y="672.2" width="1062" height="1.1" fill="#f0f1f3"/>
<rect x="180.2" y="672.4" width="1" height="25.4" fill="#eff0f2"/>
<rect x="520.5" y="672.4" width="103.5" height="25.4" fill="#6db650"/>
<rect x="520.5" y="672.1" width="103.5" height="1.3" fill="#fff" opacity="0.3"/>
<text x="66.3" y="689.16" font-size="11.5" fill="#5d5e62" stroke="#5d5e62" stroke-width="0.3" letter-spacing="0.16">13 - 19</text>
<text x="186.3" y="689.16" font-size="11.5" fill="#5d5e62" stroke="#5d5e62" stroke-width="0.3" letter-spacing="0.16">9</text>
<text x="525.5" y="689.16" font-size="11.5" fill="#fff" stroke="#fff" stroke-width="0.3" letter-spacing="0.04">Build 1 - Week 2</text>
<text x="658.2" y="689.16" font-size="11.5" fill="#5d5e62" stroke="#5d5e62" stroke-width="0.3" letter-spacing="0.16" text-anchor="middle">800</text>
<text x="727.2" y="689.16" font-size="11.5" fill="#2b2c2f" stroke="#2b2c2f" stroke-width="0.22" font-weight="bold" letter-spacing="0.16" text-anchor="middle">0</text>
<text x="813.3" y="689.16" font-size="11.5" fill="#5d5e62" stroke="#5d5e62" stroke-width="0.3" letter-spacing="0.16" text-anchor="middle">2</text>
<text x="1033.0" y="689.16" font-size="11.5" fill="#5d5e62" stroke="#5d5e62" stroke-width="0.3" letter-spacing="0.16" text-anchor="middle">102</text>
<rect x="58.6" y="697.8" width="1062" height="25.1" fill="#e6e7e9"/>
<rect x="58.6" y="697.6" width="1062" height="1.1" fill="#f0f1f3"/>
<rect x="180.2" y="697.8" width="1" height="25.1" fill="#eff0f2"/>
<rect x="520.5" y="697.8" width="103.5" height="25.1" fill="#6db650"/>
<rect x="520.5" y="697.5" width="103.5" height="1.3" fill="#fff" opacity="0.3"/>
<text x="66.3" y="714.56" font-size="11.5" fill="#5d5e62" stroke="#5d5e62" stroke-width="0.3" letter-spacing="0.16">20 - 26</text>
<text x="186.3" y="714.56" font-size="11.5" fill="#5d5e62" stroke="#5d5e62" stroke-width="0.3" letter-spacing="0.16">8</text>
<text x="525.5" y="714.56" font-size="11.5" fill="#fff" stroke="#fff" stroke-width="0.3" letter-spacing="0.04">Build 1 - Week 3</text>
<text x="658.2" y="714.56" font-size="11.5" fill="#5d5e62" stroke="#5d5e62" stroke-width="0.3" letter-spacing="0.16" text-anchor="middle">800</text>
<text x="727.2" y="714.56" font-size="11.5" fill="#2b2c2f" stroke="#2b2c2f" stroke-width="0.22" font-weight="bold" letter-spacing="0.16" text-anchor="middle">0</text>
<text x="813.3" y="714.56" font-size="11.5" fill="#5d5e62" stroke="#5d5e62" stroke-width="0.3" letter-spacing="0.16" text-anchor="middle">2</text>
<text x="1033.0" y="714.56" font-size="11.5" fill="#5d5e62" stroke="#5d5e62" stroke-width="0.3" letter-spacing="0.16" text-anchor="middle">104</text>
<rect x="58.6" y="722.9" width="1062" height="26.3" fill="#e6e7e9"/>
<rect x="58.6" y="722.7" width="1062" height="1.1" fill="#f0f1f3"/>
<rect x="180.2" y="722.9" width="1" height="26.3" fill="#eff0f2"/>
<rect x="520.5" y="722.9" width="103.5" height="26.3" fill="#6db650"/>
<rect x="520.5" y="722.6" width="103.5" height="1.3" fill="#fff" opacity="0.3"/>
<text x="66.3" y="740.56" font-size="11.5" fill="#5d5e62" stroke="#5d5e62" stroke-width="0.3" letter-spacing="0.16">27 - Jun 2</text>
<text x="186.3" y="740.56" font-size="11.5" fill="#5d5e62" stroke="#5d5e62" stroke-width="0.3" letter-spacing="0.16">7</text>
<text x="525.5" y="740.56" font-size="11.5" fill="#fff" stroke="#fff" stroke-width="0.3" letter-spacing="0.04">Build 1 - Week 4</text>
<text x="658.2" y="740.56" font-size="11.5" fill="#5d5e62" stroke="#5d5e62" stroke-width="0.3" letter-spacing="0.16" text-anchor="middle">510</text>
<text x="727.2" y="740.56" font-size="11.5" fill="#2b2c2f" stroke="#2b2c2f" stroke-width="0.22" font-weight="bold" letter-spacing="0.16" text-anchor="middle">0</text>
<text x="813.3" y="740.56" font-size="11.5" fill="#5d5e62" stroke="#5d5e62" stroke-width="0.3" letter-spacing="0.16" text-anchor="middle">-5</text>
<text x="1033.0" y="740.56" font-size="11.5" fill="#5d5e62" stroke="#5d5e62" stroke-width="0.3" letter-spacing="0.16" text-anchor="middle">99</text>
<rect x="58.6" y="749.2" width="1062" height="24.8" fill="#c5c5c6"/>
<rect x="58.6" y="772.5" width="1062" height="1.6" fill="#959698"/>
<text x="66.2" y="765.69" font-size="11.6" fill="#2b2c2f" stroke="#2b2c2f" stroke-width="0.22" font-weight="bold" letter-spacing="0.12">June</text>
<rect x="58.6" y="774.0" width="1062" height="25.4" fill="#e6e7e9"/>
<rect x="58.6" y="773.8" width="1062" height="1.1" fill="#f0f1f3"/>
<rect x="180.2" y="774.0" width="1" height="25.4" fill="#eff0f2"/>
<rect x="520.5" y="774.0" width="103.5" height="25.4" fill="#519b3c"/>
<rect x="520.5" y="773.7" width="103.5" height="1.3" fill="#fff" opacity="0.3"/>
<text x="66.3" y="790.76" font-size="11.5" fill="#5d5e62" stroke="#5d5e62" stroke-width="0.3" letter-spacing="0.16">3 - 9</text>
<text x="186.3" y="790.76" font-size="11.5" fill="#5d5e62" stroke="#5d5e62" stroke-width="0.3" letter-spacing="0.16">6</text>
<text x="525.5" y="790.76" font-size="11.5" fill="#fff" stroke="#fff" stroke-width="0.3" letter-spacing="0.04">Build 2 - Week 1</text>
<text x="658.2" y="790.76" font-size="11.5" fill="#5d5e62" stroke="#5d5e62" stroke-width="0.3" letter-spacing="0.16" text-anchor="middle">860</text>
<text x="727.2" y="790.76" font-size="11.5" fill="#2b2c2f" stroke="#2b2c2f" stroke-width="0.22" font-weight="bold" letter-spacing="0.16" text-anchor="middle">0</text>
<text x="813.3" y="790.76" font-size="11.5" fill="#5d5e62" stroke="#5d5e62" stroke-width="0.3" letter-spacing="0.16" text-anchor="middle">4</text>
<text x="1033.0" y="790.76" font-size="11.5" fill="#5d5e62" stroke="#5d5e62" stroke-width="0.3" letter-spacing="0.16" text-anchor="middle">103</text>
<rect x="58.6" y="799.4" width="1062" height="30.4" fill="#e6e7e9"/>
<rect x="58.6" y="799.2" width="1062" height="1.1" fill="#f0f1f3"/>
<rect x="180.2" y="799.4" width="1" height="30.4" fill="#eff0f2"/>
<rect x="520.5" y="799.4" width="103.5" height="30.4" fill="#519b3c"/>
<rect x="520.5" y="799.1" width="103.5" height="1.3" fill="#fff" opacity="0.3"/>
<text x="66.3" y="818.96" font-size="11.5" fill="#5d5e62" stroke="#5d5e62" stroke-width="0.3" letter-spacing="0.16">10 - 16</text>
<text x="186.3" y="818.96" font-size="11.5" fill="#5d5e62" stroke="#5d5e62" stroke-width="0.3" letter-spacing="0.16">5</text>
<text x="271.6" y="818.96" font-size="11.5" fill="#5d5e62" stroke="#5d5e62" stroke-width="0.3" letter-spacing="0.16">Cuchara 60k</text>
<g transform="translate(453.7 805.3) scale(1.13)"><path d="M-5.900 1.5 C-9.300 1.100 -9.100 7.300 -4.300 8.500 M5.900 1.500 C9.300 1.100 9.100 7.300 4.300 8.500" fill="none" stroke="#3a9193" stroke-width="1.15"/><path d="M-5.600 0 H5.600 C5.600 6.600 4.300 10.200 1.300 11.600 L1.200 13.200 C1.700 14.800 5.600 15.200 5.900 16.800 H-5.900 C-5.600 15.200 -1.700 14.800 -1.200 13.200 L-1.300 11.600 C-4.300 10.200 -5.600 6.600 -5.600 0 Z" fill="#196b6d"/><text x="0" y="7.100" text-anchor="middle" font-size="8.200" font-weight="bold" fill="#b2f3ee">C</text></g>
<text x="525.5" y="818.96" font-size="11.5" fill="#fff" stroke="#fff" stroke-width="0.3" letter-spacing="0.04">Build 2 - Week 2</text>
<text x="658.2" y="818.96" font-size="11.5" fill="#5d5e62" stroke="#5d5e62" stroke-width="0.3" letter-spacing="0.16" text-anchor="middle">860</text>
<text x="727.2" y="818.96" font-size="11.5" fill="#2b2c2f" stroke="#2b2c2f" stroke-width="0.22" font-weight="bold" letter-spacing="0.16" text-anchor="middle">0</text>
<text x="813.3" y="818.96" font-size="11.5" fill="#5d5e62" stroke="#5d5e62" stroke-width="0.3" letter-spacing="0.16" text-anchor="middle">3</text>
<text x="1033.0" y="818.96" font-size="11.5" fill="#5d5e62" stroke="#5d5e62" stroke-width="0.3" letter-spacing="0.16" text-anchor="middle">106</text>
<rect x="58.6" y="829.8" width="1062" height="25.7" fill="#e6e7e9"/>
<rect x="58.6" y="829.6" width="1062" height="1.1" fill="#f0f1f3"/>
<rect x="180.2" y="829.8" width="1" height="25.7" fill="#eff0f2"/>
<rect x="520.5" y="829.8" width="103.5" height="25.7" fill="#519b3c"/>
<rect x="520.5" y="829.5" width="103.5" height="1.3" fill="#fff" opacity="0.3"/>
<text x="66.3" y="846.96" font-size="11.5" fill="#5d5e62" stroke="#5d5e62" stroke-width="0.3" letter-spacing="0.16">17 - 23</text>
<text x="186.3" y="846.96" font-size="11.5" fill="#5d5e62" stroke="#5d5e62" stroke-width="0.3" letter-spacing="0.16">4</text>
<text x="525.5" y="846.96" font-size="11.5" fill="#fff" stroke="#fff" stroke-width="0.3" letter-spacing="0.04">Build 2 - Week 3</text>
<text x="658.2" y="846.96" font-size="11.5" fill="#5d5e62" stroke="#5d5e62" stroke-width="0.3" letter-spacing="0.16" text-anchor="middle">860</text>
<text x="727.2" y="846.96" font-size="11.5" fill="#2b2c2f" stroke="#2b2c2f" stroke-width="0.22" font-weight="bold" letter-spacing="0.16" text-anchor="middle">0</text>
<text x="813.3" y="846.96" font-size="11.5" fill="#5d5e62" stroke="#5d5e62" stroke-width="0.3" letter-spacing="0.16" text-anchor="middle">3</text>
<text x="1033.0" y="846.96" font-size="11.5" fill="#5d5e62" stroke="#5d5e62" stroke-width="0.3" letter-spacing="0.16" text-anchor="middle">109</text>
<rect x="58.6" y="855.5" width="1062" height="25.5" fill="#e6e7e9"/>
<rect x="58.6" y="855.3" width="1062" height="1.1" fill="#f0f1f3"/>
<rect x="180.2" y="855.5" width="1" height="25.5" fill="#eff0f2"/>
<rect x="520.5" y="855.5" width="103.5" height="25.5" fill="#519b3c"/>
<rect x="520.5" y="855.2" width="103.5" height="1.3" fill="#fff" opacity="0.3"/>
<text x="66.3" y="872.46" font-size="11.5" fill="#5d5e62" stroke="#5d5e62" stroke-width="0.3" letter-spacing="0.16">24 - 30</text>
<text x="186.3" y="872.46" font-size="11.5" fill="#5d5e62" stroke="#5d5e62" stroke-width="0.3" letter-spacing="0.16">3</text>
<text x="525.5" y="872.46" font-size="11.5" fill="#fff" stroke="#fff" stroke-width="0.3" letter-spacing="0.04">Build 2 - Week 4</text>
<text x="658.2" y="872.46" font-size="11.5" fill="#5d5e62" stroke="#5d5e62" stroke-width="0.3" letter-spacing="0.16" text-anchor="middle">510</text>
<text x="727.2" y="872.46" font-size="11.5" fill="#2b2c2f" stroke="#2b2c2f" stroke-width="0.22" font-weight="bold" letter-spacing="0.16" text-anchor="middle">0</text>
<text x="813.3" y="872.46" font-size="11.5" fill="#5d5e62" stroke="#5d5e62" stroke-width="0.3" letter-spacing="0.16" text-anchor="middle">-6</text>
<text x="1033.0" y="872.46" font-size="11.5" fill="#5d5e62" stroke="#5d5e62" stroke-width="0.3" letter-spacing="0.16" text-anchor="middle">103</text>
<rect x="58.6" y="881.0" width="1062" height="25.0" fill="#c5c5c6"/>
<rect x="58.6" y="904.5" width="1062" height="1.6" fill="#959698"/>
<text x="66.2" y="897.79" font-size="11.6" fill="#2b2c2f" stroke="#2b2c2f" stroke-width="0.22" font-weight="bold" letter-spacing="0.12">July</text>
<rect x="58.6" y="906.0" width="1062" height="24.7" fill="#e6e7e9"/>
<rect x="58.6" y="905.8" width="1062" height="1.1" fill="#f0f1f3"/>
<rect x="180.2" y="906.0" width="1" height="24.7" fill="#eff0f2"/>
<rect x="520.5" y="906.0" width="103.5" height="24.7" fill="#d6b134"/>
<rect x="520.5" y="905.7" width="103.5" height="1.3" fill="#fff" opacity="0.3"/>
<text x="66.3" y="922.96" font-size="11.5" fill="#5d5e62" stroke="#5d5e62" stroke-width="0.3" letter-spacing="0.16">1 - 7</text>
<text x="186.3" y="922.96" font-size="11.5" fill="#5d5e62" stroke="#5d5e62" stroke-width="0.3" letter-spacing="0.16">2</text>
<text x="525.5" y="922.96" font-size="11.5" fill="#fff" stroke="#fff" stroke-width="0.3" letter-spacing="0.04">Peak - Week 1</text>
<text x="658.2" y="922.96" font-size="11.5" fill="#5d5e62" stroke="#5d5e62" stroke-width="0.3" letter-spacing="0.16" text-anchor="middle">610</text>
<text x="727.2" y="922.96" font-size="11.5" fill="#2b2c2f" stroke="#2b2c2f" stroke-width="0.22" font-weight="bold" letter-spacing="0.16" text-anchor="middle">0</text>
<text x="813.3" y="922.96" font-size="11.5" fill="#5d5e62" stroke="#5d5e62" stroke-width="0.3" letter-spacing="0.16" text-anchor="middle">-2</text>
<text x="1033.0" y="922.96" font-size="11.5" fill="#5d5e62" stroke="#5d5e62" stroke-width="0.3" letter-spacing="0.16" text-anchor="middle">101</text>
</svg>
<svg class="gear2" viewBox="-10 -10 20 20" width="13" height="13"><g fill="#c6c7ca"><rect x="-1.9" y="-8.6" width="3.8" height="4" rx="0.8" transform="rotate(0)"/><rect x="-1.9" y="-8.6" width="3.8" height="4" rx="0.8" transform="rotate(45)"/><rect x="-1.9" y="-8.6" width="3.8" height="4" rx="0.8" transform="rotate(90)"/><rect x="-1.9" y="-8.6" width="3.8" height="4" rx="0.8" transform="rotate(135)"/><rect x="-1.9" y="-8.6" width="3.8" height="4" rx="0.8" transform="rotate(180)"/><rect x="-1.9" y="-8.6" width="3.8" height="4" rx="0.8" transform="rotate(225)"/><rect x="-1.9" y="-8.6" width="3.8" height="4" rx="0.8" transform="rotate(270)"/><rect x="-1.9" y="-8.6" width="3.8" height="4" rx="0.8" transform="rotate(315)"/></g><circle r="5" fill="none" stroke="#c6c7ca" stroke-width="2.6"/></svg>
</div>
</div>
</div>
</body>
</html>
